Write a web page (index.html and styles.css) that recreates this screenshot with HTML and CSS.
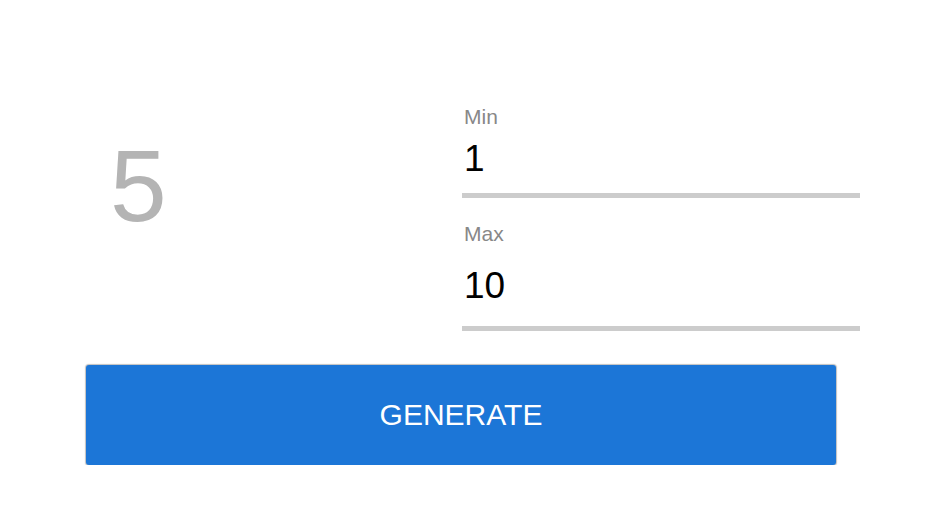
FILE: index.html
```html
<!DOCTYPE html>
<html lang="en">
<head>
<meta charset="utf-8">
<title>Random Number Generator</title>
<link rel="stylesheet" href="styles.css">
</head>
<body>
<main class="app">
  <section class="top">
    <div class="result">5</div>
    <div class="fields">
      <label class="field">
        <span class="field-label">Min</span>
        <input class="field-input" type="text" value="1">
      </label>
      <label class="field field-max">
        <span class="field-label">Max</span>
        <input class="field-input" type="text" value="10">
      </label>
    </div>
  </section>
  <button class="generate" type="button">GENERATE</button>
</main>
</body>
</html>
```

FILE: styles.css
```css
html, body {
  margin: 0;
  padding: 0;
  background: #ffffff;
}

body {
  font-family: "Liberation Sans", Arial, sans-serif;
}

.app {
  padding-top: 105px;
}

.top {
  display: flex;
  align-items: flex-start;
}

.result {
  box-sizing: border-box;
  width: 462px;
  padding-left: 110px;
  margin-top: 23px;
  font-size: 102px;
  line-height: normal;
  color: #b4b4b4;
}

.fields {
  width: 398px;
  display: flex;
  flex-direction: column;
  gap: 24px;
}

.field {
  display: flex;
  flex-direction: column;
}

.field-label {
  font-size: 21px;
  line-height: 23px;
  color: #888888;
  padding-left: 2px;
}

.field-input {
  font-family: "Liberation Sans", Arial, sans-serif;
  font-size: 37px;
  line-height: normal;
  color: #000000;
  border: none;
  border-bottom: 5px solid #cccccc;
  outline: none;
  background: transparent;
  padding: 10px 0 13px 2px;
  margin: 0;
  width: 100%;
  box-sizing: border-box;
}

.field-max .field-input {
  padding-top: 20px;
  padding-bottom: 19px;
}

.generate {
  display: block;
  margin: 34px 0 0 86px;
  width: 750px;
  height: 100px;
  border: none;
  border-radius: 3px;
  background: #1c76d7;
  color: #ffffff;
  font-family: "Liberation Sans", Arial, sans-serif;
  font-size: 30px;
  box-shadow: 0 0 1px 1px rgba(0, 0, 0, 0.25);
  cursor: pointer;
}
```
